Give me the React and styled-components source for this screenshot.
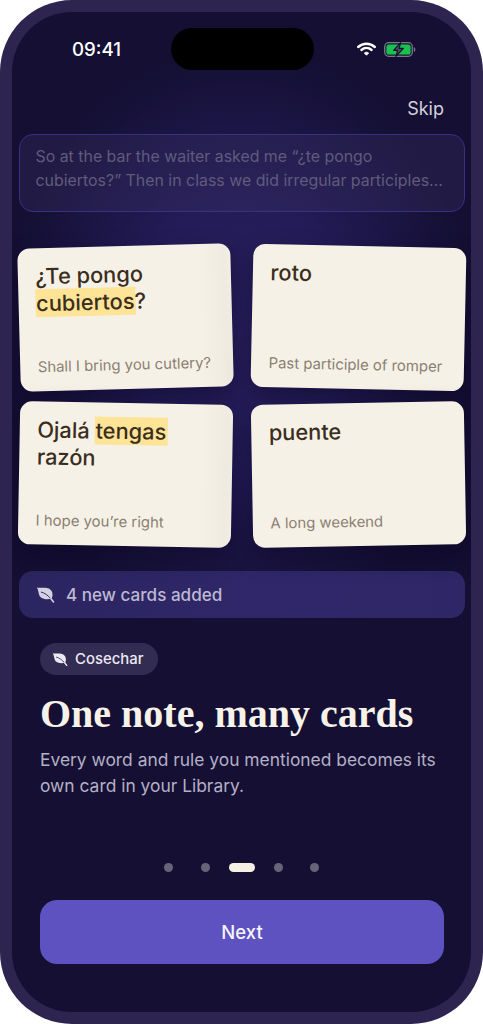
import React from 'react';
import styled, { createGlobalStyle } from 'styled-components';

function LeafIcon({ size }) {
  return (
    <svg width={size} height={size * 0.9} viewBox="0 0 20 18" fill="none">
      <path d="M1 1.5C4.5 2.6 10 0.6 14 3C17.6 5.2 18.2 9.6 16.6 13C13 14.6 8 14.2 5 11.8C2.4 9.6 3 5 1 1.5Z" fill="currentColor" />
      <path d="M5.6 6.4C9 7.2 12.6 9.8 15.8 13.6" stroke="#2b2658" strokeWidth="1" strokeLinecap="round" />
      <path d="M15.8 13.4L18.4 16.8" stroke="currentColor" strokeWidth="1.7" strokeLinecap="round" />
    </svg>
  );
}

function WifiIcon() {
  return (
    <svg width="19" height="14" viewBox="0 0 19 14" fill="none">
      <path d="M1.2 5C6 0.6 13 0.6 17.8 5" stroke="#fff" strokeWidth="2.4" strokeLinecap="round" />
      <path d="M4.4 8C7.4 5.3 11.6 5.3 14.6 8" stroke="#fff" strokeWidth="2.4" strokeLinecap="round" />
      <path d="M7.4 11C8.6 10 10.4 10 11.6 11L9.5 13.2Z" fill="#fff" stroke="#fff" strokeWidth="1" strokeLinejoin="round" />
    </svg>
  );
}

function BatteryIcon() {
  return (
    <svg width="32" height="15" viewBox="0 0 32 15" fill="none">
      <rect x="0.7" y="0.7" width="27.6" height="13.6" rx="4" fill="#1b1a33" stroke="#77768a" strokeWidth="1.3" />
      <rect x="2.4" y="2.4" width="24.2" height="10.2" rx="2.6" fill="#19c24f" />
      <path d="M29.8 5.2C31 5.6 31.4 6.4 31.4 7.5C31.4 8.6 31 9.4 29.8 9.8Z" fill="#77768a" />
      <path d="M16.6 0.6L9.6 8.4H13.6L12 14.4L19.4 6.4H15.2Z" fill="#4b4a5e" stroke="#15102f" strokeWidth="1.2" strokeLinejoin="round" />
    </svg>
  );
}

function App() {
  const cards = [
    { id: 1, tilt: -1.5, shade: true, title: <>¿Te pongo <Mark>cubiertos</Mark>?</>, hint: 'Shall I bring you cutlery?' },
    { id: 2, tilt: 1.2, title: 'roto', hint: 'Past participle of romper' },
    { id: 3, tilt: 1, shade: true, title: <>Ojalá <Mark>tengas</Mark> razón</>, hint: 'I hope you’re right' },
    { id: 4, tilt: -1, title: 'puente', hint: 'A long weekend' },
  ];

  return (
    <>
      <GlobalStyle />
      <Phone>
        <Screen>
          <StatusBar>
            <Clock>09:41</Clock>
            <Island />
            <StatusIcons>
              <WifiIcon />
              <BatteryIcon />
            </StatusIcons>
          </StatusBar>
          <SkipRow>
            <Skip>Skip</Skip>
          </SkipRow>
          <NoteBox>
            So at the bar the waiter asked me “¿te pongo cubiertos?” Then in class we did irregular participles...
          </NoteBox>
          <CardGrid>
            {cards.map((card) => (
              <Card key={card.id} $tilt={card.tilt} $shade={card.shade}>
                <CardTitle>{card.title}</CardTitle>
                <CardHint>{card.hint}</CardHint>
              </Card>
            ))}
          </CardGrid>
          <Banner>
            <LeafIcon size={19} />
            <span>4 new cards added</span>
          </Banner>
          <Copy>
            <Pill>
              <LeafIcon size={16} />
              <span>Cosechar</span>
            </Pill>
            <Title>One note, many cards</Title>
            <Body>Every word and rule you mentioned becomes its own card in your Library.</Body>
          </Copy>
          <Dots>
            <Dot />
            <Dot />
            <Dot $active />
            <Dot />
            <Dot />
          </Dots>
          <NextButton>Next</NextButton>
        </Screen>
      </Phone>
    </>
  );
}

const GlobalStyle = createGlobalStyle`
  html, body {
    margin: 0;
    padding: 0;
    background: #fff;
  }
  * {
    box-sizing: border-box;
  }
`;

const Phone = styled.div`
  width: 483px;
  height: 1024px;
  padding: 12px;
  border-radius: 72px;
  background: #2d2550;
  font-family: Inter, "Liberation Sans", sans-serif;
`;

const Screen = styled.div`
  display: flex;
  flex-direction: column;
  height: 1000px;
  overflow: hidden;
  border-radius: 60px;
  background:
    radial-gradient(ellipse 235px 290px at 228px 325px, #2a2060 0%, #241c58 45%, rgba(32, 24, 78, 0) 100%),
    #140f33;
`;

const StatusBar = styled.div`
  display: grid;
  grid-template-columns: 159px 143px 1fr;
  align-items: center;
  height: 42px;
  margin-top: 16px;
`;

const Clock = styled.div`
  padding-left: 60px;
  color: #fff;
  font-size: 18.7px;
  font-weight: 500;
`;

const Island = styled.div`
  height: 42px;
  border-radius: 21px;
  background: #000;
`;

const StatusIcons = styled.div`
  display: flex;
  align-items: center;
  gap: 8px;
  padding-left: 43px;
`;

const SkipRow = styled.div`
  display: flex;
  justify-content: flex-end;
  height: 64px;
  padding: 28px 27px 0 0;
`;

const Skip = styled.span`
  color: #d4d1dd;
  font-size: 18px;
  line-height: 22px;
`;

const NoteBox = styled.div`
  height: 78px;
  margin: 0 6px 0 7px;
  padding: 9.5px 15.5px;
  border: 1.5px solid #3a3080;
  border-radius: 14px;
  background: rgba(56, 48, 100, 0.35);
  color: #605b7c;
  font-size: 15.9px;
  line-height: 24.5px;
`;

const CardGrid = styled.div`
  display: grid;
  grid-template-columns: 213px 213px;
  grid-auto-rows: 143px;
  column-gap: 20px;
  row-gap: 14px;
  margin: 34px 0 0 7px;
`;

const Card = styled.div`
  display: flex;
  flex-direction: column;
  justify-content: space-between;
  padding: 15px 18px 15px 17.5px;
  border-radius: 12px;
  background: ${({ $shade }) => ($shade ? 'linear-gradient(90deg, #f6f1e6 85%, #f0ebe0 97%, #f5f0e5 100%)' : '#f6f1e6')};
  box-shadow: 0 10px 24px rgba(8, 5, 28, 0.45);
  transform: rotate(${({ $tilt }) => $tilt}deg);
`;

const CardTitle = styled.div`
  color: #3a2d1d;
  font-size: 21.8px;
  font-weight: 500;
  line-height: 27px;
`;

const Mark = styled.span`
  margin: 0 -1px;
  padding: 1px;
  background: #fee496;
`;

const CardHint = styled.div`
  color: #8a7f72;
  font-size: 14.9px;
  line-height: 18px;
`;

const Banner = styled.div`
  display: flex;
  align-items: center;
  gap: 11px;
  height: 47px;
  margin: 25px 6px 0 7px;
  padding-left: 17px;
  border-radius: 14px;
  background: linear-gradient(90deg, #2b2560, #30276a 60%, #2e2665);
  color: #bdb9d2;
  font-size: 17.1px;
  font-weight: 500;

  svg {
    color: #d4d1e2;
  }
`;

const Copy = styled.div`
  display: flex;
  flex-direction: column;
  align-items: flex-start;
  height: 244px;
  padding: 25px 28px 0;
`;

const Pill = styled.div`
  display: flex;
  align-items: center;
  gap: 7px;
  height: 32px;
  padding: 0 15px 0 12px;
  border-radius: 16px;
  background: #322c52;
  color: #ece9f2;
  font-size: 14.9px;
  font-weight: 500;
`;

const Title = styled.h1`
  margin: 15px 0 0;
  color: #f6f2e8;
  font-family: "Liberation Serif", serif;
  font-size: 40px;
  font-weight: 700;
  line-height: 48px;
  white-space: nowrap;
`;

const Body = styled.p`
  margin: 9px 0 0;
  color: #b4b0c6;
  font-size: 17.4px;
  line-height: 26px;
`;

const Dots = styled.div`
  display: grid;
  grid-template-columns: repeat(5, 36.5px);
  justify-content: center;
  justify-items: center;
  align-items: center;
  height: 10px;
`;

const Dot = styled.span`
  width: ${({ $active }) => ($active ? '26px' : '9px')};
  height: 9px;
  border-radius: 5px;
  background: ${({ $active }) => ($active ? '#f5f0e4' : '#676478')};
`;

const NextButton = styled.button`
  display: block;
  height: 64px;
  margin: 28px 27px 0 28px;
  border: 0;
  border-radius: 17px;
  background: #5d52c0;
  color: #f7f4fb;
  font-family: inherit;
  font-size: 18.5px;
  font-weight: 500;
`;

export default App;
